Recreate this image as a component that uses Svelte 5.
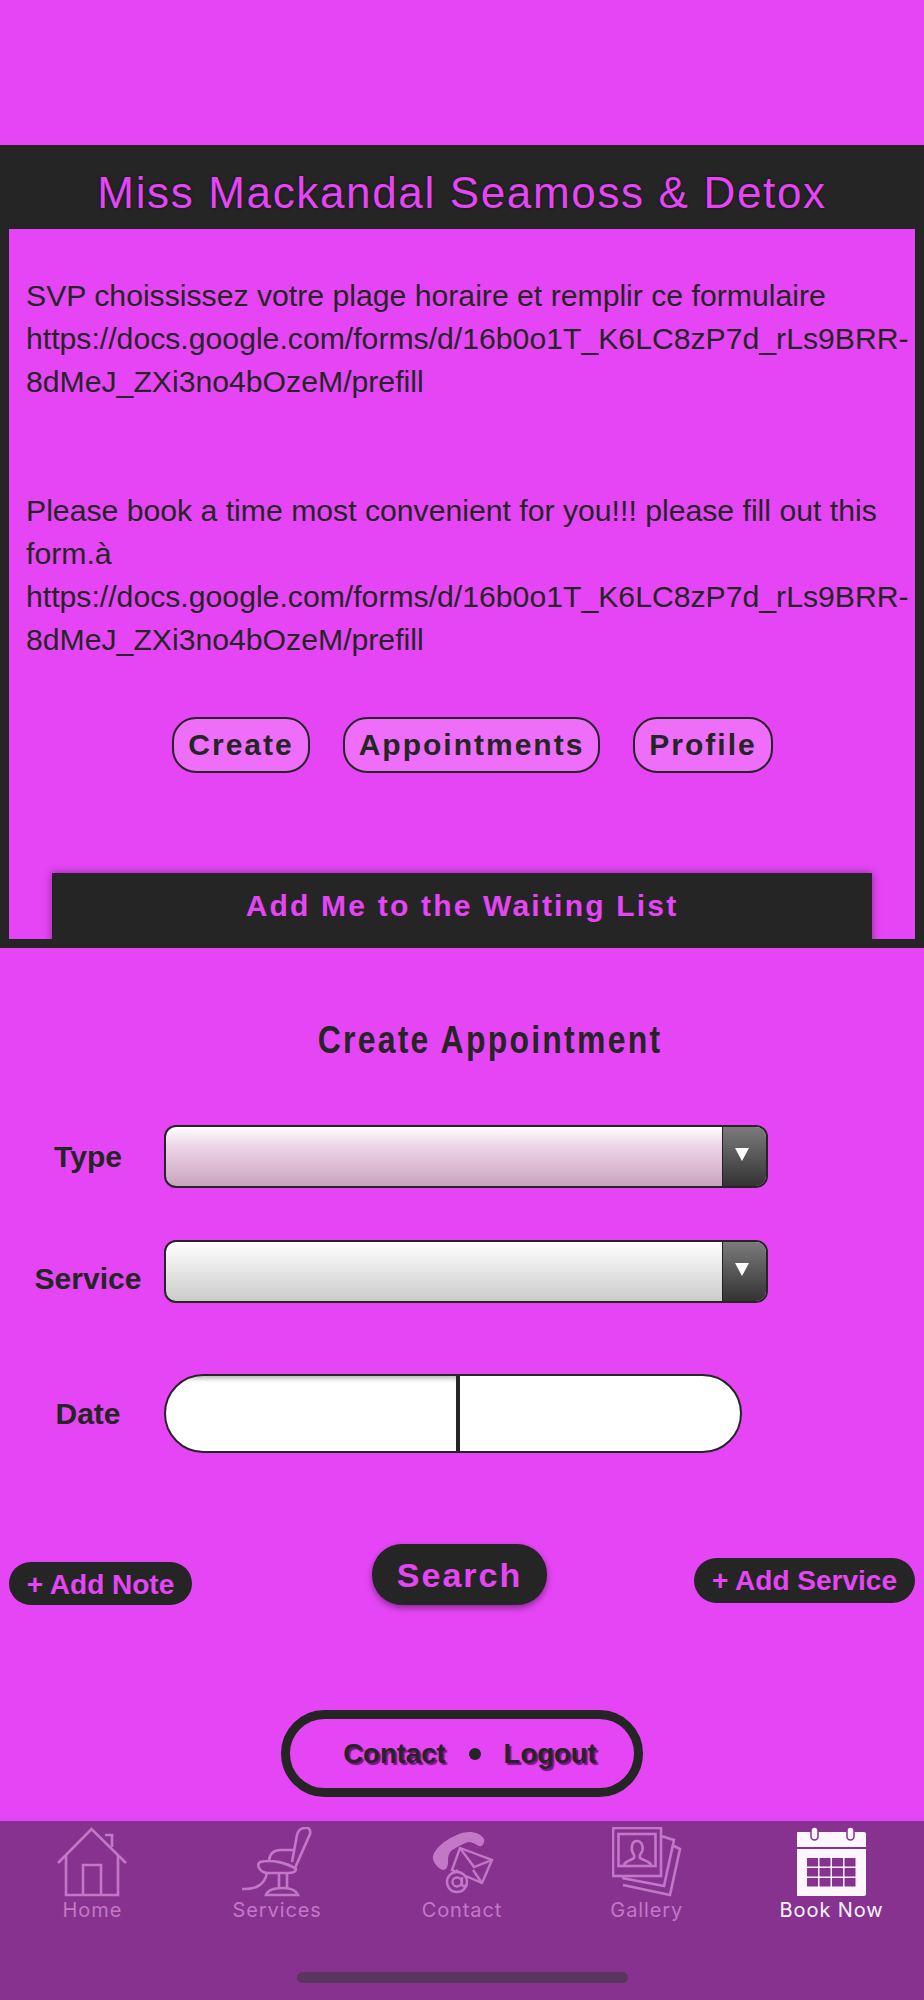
<script>
  const tabs = ['Home', 'Services', 'Contact', 'Gallery', 'Book Now'];
  const calCols = [11, 23.5, 36, 48.5];
  const calRows = [31, 41, 51];
</script>

<div class="page">
  <section class="panel">
    <h1 class="brand">Miss Mackandal Seamoss &amp; Detox</h1>
    <div class="inner">
      <p class="msg">SVP choississez votre plage horaire et remplir ce formulaire https://docs.google.com/forms/d/16b0o1T_K6LC8zP7d_rLs9BRR-8dMeJ_ZXi3no4bOzeM/prefill</p>
      <p class="msg second">Please book a time most convenient for you!!! please fill out this form.à https://docs.google.com/forms/d/16b0o1T_K6LC8zP7d_rLs9BRR-8dMeJ_ZXi3no4bOzeM/prefill</p>
      <div class="pills">
        <span class="pill">Create</span>
        <span class="pill">Appointments</span>
        <span class="pill">Profile</span>
      </div>
      <div class="wait">Add Me to the Waiting List</div>
    </div>
  </section>

  <h2 class="title">Create Appointment</h2>

  <div class="row r1">
    <span class="lab">Type</span>
    <div class="sel tinted"><span class="arrow"><i></i></span></div>
  </div>
  <div class="row r2">
    <span class="lab lab2">Service</span>
    <div class="sel"><span class="arrow"><i></i></span></div>
  </div>
  <div class="row r3">
    <span class="lab">Date</span>
    <div class="date"><span class="d1"></span><span class="d2"></span></div>
  </div>

  <div class="actions">
    <span class="add note">+ Add Note</span>
    <span class="search">Search</span>
    <span class="add svc">+ Add Service</span>
  </div>

  <div class="footlinks">
    <div class="oval"><span>Contact</span><b></b><span>Logout</span></div>
  </div>

  <nav class="tabs">
    <div class="tab">
      <svg viewBox="0 0 70 70" width="70" height="70" fill="none" stroke="currentColor" stroke-width="2.6">
        <path d="M1 36 34.500 2 69 36"/>
        <path d="M9 28v40h52V28M26 68V38h18v30M48 8h7v12"/>
      </svg>
      <span>{tabs[0]}</span>
    </div>
    <div class="tab">
      <svg viewBox="0 0 70 70" width="70" height="70" fill="none" stroke="currentColor" stroke-width="2.6">
        <path d="M53 41 68 7c1-5-2-7-5-6-4 0-7 3-8 7l-5 27"/>
        <path d="M27 33c1-7 6-10 12-10h12"/>
        <path d="M18 35c12-3 27 1 36 7 0 3-4 4-8 4H26c-8 0-12-8-8-11Z"/>
        <path d="M25 46C22 60 12 62 0 62M37 46v15M45 46v15M24 68c2-6 12-7 17-7 9 0 13 2 15 7Z"/>
      </svg>
      <span>{tabs[1]}</span>
    </div>
    <div class="tab">
      <svg viewBox="0 0 70 70" width="70" height="70" fill="none" stroke="currentColor" stroke-width="2.4">
        <path fill="currentColor" stroke="none" d="M6 32c1 5 6 10 10 11 3 0 5-3 5-8 0-6 1-11 6-13 5-3 12-7 15-7 5 0 9 5 12 4 2 0 4-5 3-7-3-5-9-7-14-7-10 0-18 5-26 10C11 20 5 26 6 32Z"/>
        <path d="M33 21 65 33 55 56 25 43Z"/>
        <path d="M33 21 47 40 65 33M46 43 55 56M29 43 36 49"/>
        <circle cx="30" cy="55" r="10" fill="#883290"/>
        <circle cx="30" cy="55" r="4.500"/>
        <path d="M35 50v7c0 3 4 3 5 0"/>
      </svg>
      <span>{tabs[2]}</span>
    </div>
    <div class="tab">
      <svg viewBox="0 0 70 70" width="70" height="70" fill="none" stroke="currentColor" stroke-width="2.600">
        <rect x="1" y="1" width="48" height="48"/>
        <rect x="6.500" y="7" width="37" height="32"/>
        <path d="M12 38c1-4 8-5 10-7 1-2 0-3-1-5-2-3-2-12 4-12s7 9 4 12c-1 2-2 3-1 5 2 2 10 3 11 7"/>
        <path d="M49 9 62 13 52 59 10 51M62 19 68 22 58 68 11 58"/>
      </svg>
      <span>{tabs[3]}</span>
    </div>
    <div class="tab active">
      <svg viewBox="1 0 70 70" width="70" height="70">
        <path fill="currentColor" d="M2 5h66a2 2 0 0 1 2 2v13H0V7a2 2 0 0 1 2-2Z"/>
        <rect fill="currentColor" stroke="#883290" stroke-width="1.500" x="15" y="0" width="7" height="13" rx="3.500"/>
        <rect fill="currentColor" stroke="#883290" stroke-width="1.500" x="51" y="0" width="7" height="13" rx="3.500"/>
        <path fill="currentColor" d="M0 22h70v45a2 2 0 0 1-2 2H2a2 2 0 0 1-2-2Z"/>
        <g fill="#883290">
          {#each calRows as y}
            {#each calCols as x}
              <rect {x} {y} width="11" height="8.500"/>
            {/each}
          {/each}
        </g>
      </svg>
      <span>{tabs[4]}</span>
    </div>
    <i class="home-bar"></i>
  </nav>
</div>

<style>
  :global(body) { margin: 0; background: #e545f5; }
  .page { width: 924px; height: 2000px; background: #e545f5; font-family: "Liberation Sans", Arial, sans-serif; color: #252525; position: relative; overflow: hidden; display: flex; flex-direction: column; }
  .panel { margin-top: 145px; height: 803px; box-sizing: border-box; background: #252525; padding: 0 9px 9px; display: flex; flex-direction: column; }
  .brand { margin: 0; height: 84px; line-height: 95px; text-align: center; font-weight: 400; font-size: 44px; letter-spacing: 1.65px; color: #e545f5; text-shadow: 0 0 3px rgba(0,0,0,.6); }
  .inner { flex: 1; background: #e545f5; overflow: hidden; padding: 45px 0 0 17px; }
  .msg { margin: 0; font-size: 30.2px; line-height: 43px; width: 889px; color: #252525; }
  .second { margin-top: 86px; }
  .pills { margin-top: 56px; padding-left: 4px; display: flex; justify-content: center; gap: 33px; }
  .pill { height: 56px; box-sizing: border-box; border: 2px solid #252525; border-radius: 24px; background: #ee6df9; padding: 0 14px; line-height: 52px; font-weight: 700; font-size: 30px; letter-spacing: 2px; }
  .wait { margin: 100px 0 0 26px; width: 820px; height: 80px; background: #252525; color: #e545f5; text-align: center; font-weight: 700; font-size: 30px; letter-spacing: 2.2px; line-height: 66px; box-shadow: 0 0 8px rgba(0,0,0,.4); }
  .title { margin: 70px 0 0 56px; width: 868px; text-align: center; font-size: 38px; line-height: 44px; letter-spacing: 2.7px; font-weight: 700; transform: scaleX(.84); }
  .row { display: flex; align-items: center; }
  .r1 { margin-top: 63px; }
  .r2 { margin-top: 52px; }
  .r3 { margin-top: 71px; }
  .lab { width: 164px; flex: none; box-sizing: border-box; text-align: center; padding-left: 12px; font-weight: 700; font-size: 30px; }
  .lab2 { padding-top: 14px; }
  .sel { width: 604px; height: 63px; box-sizing: border-box; border: 2px solid #252525; border-radius: 12px; background: linear-gradient(#fff, #cbcbcb); position: relative; overflow: hidden; }
  .tinted { background: linear-gradient(#fff, #efd6e9 30%, #c9a3bf); }
  .arrow { position: absolute; right: 0; top: 0; bottom: 0; width: 43px; background: linear-gradient(#7b7b7b, #333); border-left: 1px solid #222; display: flex; align-items: center; justify-content: center; }
  .arrow i { width: 0; height: 0; border-left: 7.5px solid transparent; border-right: 7.5px solid transparent; border-top: 13px solid #fff; margin-right: 5px; margin-top: -4px; }
  .date { width: 578px; height: 79px; box-sizing: border-box; border: 2px solid #252525; border-radius: 40px; background: #fff; display: flex; overflow: hidden; }
  .d1 { width: 294px; box-sizing: border-box; border-right: 4px solid #252525; box-shadow: inset 0 6px 4px -3px rgba(0,0,0,.25); }
  .d2 { flex: 1; }
  .actions { position: relative; height: 90px; }
  .add, .search { position: absolute; background: #252525; color: #e545f5; font-weight: 700; text-align: center; }
  .add { font-size: 28px; border-radius: 24px; }
  .note { left: 9px; top: 109px; width: 183px; height: 43px; line-height: 45px; }
  .svc { left: 694px; top: 105px; width: 221px; height: 45px; line-height: 46px; }
  .search { left: 372px; top: 91px; width: 175px; height: 61px; border-radius: 30px; font-size: 34px; letter-spacing: 2px; line-height: 62px; box-shadow: 0 3px 6px rgba(0,0,0,.4); }
  .footlinks { position: absolute; left: 0; right: 0; top: 1710px; display: flex; justify-content: center; }
  .oval { width: 362px; height: 87px; box-sizing: border-box; border: 9px solid #252525; border-radius: 44px; padding-left: 16px; display: flex; align-items: center; justify-content: center; gap: 23px; font-weight: 700; font-size: 27.5px; color: #252525; text-shadow: 2px 2px 1px rgba(70,0,80,.7); }
  .oval b { width: 12px; height: 12px; border-radius: 50%; background: #252525; }
  .tabs { position: absolute; left: 0; right: 0; top: 1821px; height: 179px; background: #883290; display: flex; padding-top: 6px; box-sizing: border-box; }
  .tab { flex: none; width: 184.8px; display: flex; flex-direction: column; align-items: center; color: #c278c6; font-family: Inter, "Noto Sans", sans-serif; font-size: 20px; line-height: 26px; letter-spacing: .9px; }
  .tab svg { display: block; }
  .tab.active { color: #fdf6fe; }
  .home-bar { position: absolute; left: 297px; top: 151px; width: 331px; height: 11px; border-radius: 6px; background: #5a355f; }
</style>
